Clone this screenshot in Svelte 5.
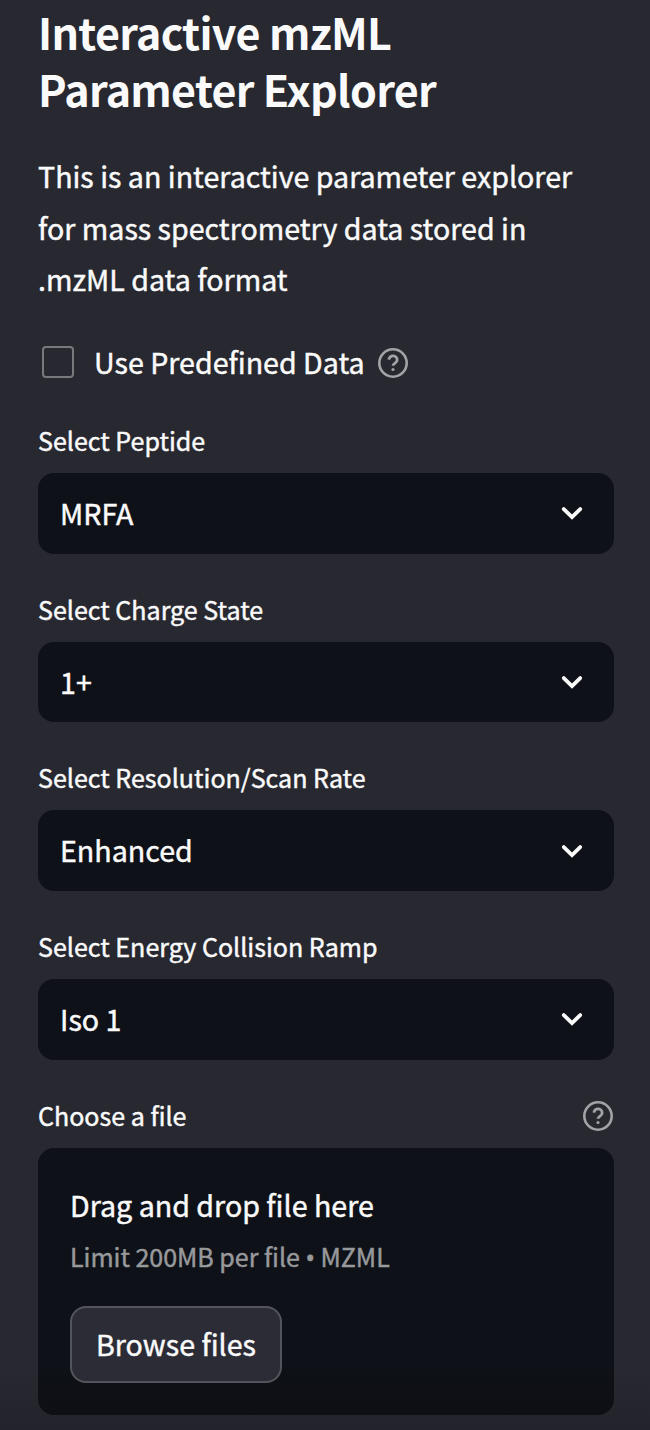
<script>
  const fields = [
    { label: 'Select Peptide', value: 'MRFA' },
    { label: 'Select Charge State', value: '1+' },
    { label: 'Select Resolution/Scan Rate', value: 'Enhanced' },
    { label: 'Select Energy Collision Ramp', value: 'Iso 1' }
  ];
</script>

{#snippet help()}
  <svg class="help" viewBox="0 0 30 30" fill="none" stroke="currentColor" stroke-linecap="round" stroke-linejoin="round">
    <circle cx="15" cy="15" r="13.7" stroke-width="2.6" />
    <path d="M10.9 11.6a4.1 4.1 0 0 1 8.2 .6c0 2.7-4.1 3.1-4.1 5.6" stroke-width="2.8" stroke-linecap="butt" />
    <circle cx="15" cy="21.5" r="1.6" fill="currentColor" stroke="none" />
  </svg>
{/snippet}

<main class="sidebar">
  <h1>Interactive mzML<br />Parameter Explorer</h1>
  <p class="intro">This is an interactive parameter explorer<br />for mass spectrometry data stored in<br />.mzML data format</p>

  <div class="check">
    <span class="box"></span>
    <span class="check-label">Use Predefined Data</span>
    {@render help()}
  </div>

  {#each fields as field}
    <section class="field">
      <div class="label">{field.label}</div>
      <div class="select">
        <span>{field.value}</span>
        <svg class="chevron" viewBox="0 0 22 14" fill="none" stroke="currentColor" stroke-width="3.8" stroke-linecap="round" stroke-linejoin="miter">
          <path d="M2.8 3.1 11 11 19.2 3.1" />
        </svg>
      </div>
    </section>
  {/each}

  <section class="upload">
    <div class="label upload-label"><span>Choose a file</span>{@render help()}</div>
    <div class="dropzone">
      <div class="drag">Drag and drop file here</div>
      <div class="limit">Limit 200MB per file <span class="bullet">•</span> MZML</div>
      <button>Browse files</button>
    </div>
  </section>
</main>

<style>
  :global(body) {
    margin: 0;
    background: #272830;
  }
  .sidebar {
    box-sizing: border-box;
    width: 650px;
    height: 1430px;
    padding: 3px 36px 0 38px;
    overflow: hidden;
    background: linear-gradient(to bottom, #272830 0, #272830 1370px, #22232b 1430px);
    color: #fafafa;
    font-family: "Noto Sans CJK SC", "Source Sans Pro", sans-serif;
    font-size: 28.62px;
    white-space: nowrap;
    -webkit-text-stroke: 0.45px currentColor;
  }
  h1 {
    margin: 0;
    font-size: 43px;
    line-height: 57px;
    font-weight: 700;
    letter-spacing: -0.7px;
    -webkit-text-stroke: 0;
  }
  .intro {
    margin: 33.3px 0 0;
    line-height: 51.4px;
  }
  .check {
    display: flex;
    align-items: center;
    height: 52px;
    margin-top: 31.5px;
  }
  .box {
    box-sizing: border-box;
    width: 32px;
    height: 32px;
    margin: 0 20px 0 4px;
    border: 2px solid #79797d;
    border-radius: 4px;
  }
  .check-label {
    line-height: 52px;
  }
  .help {
    flex: none;
    width: 30px;
    height: 30px;
    color: #a3a3a7;
  }
  .check .help {
    margin: 2px 0 0 13px;
  }
  .field {
    height: 168.7px;
  }
  .check + .field {
    margin-top: 34px;
  }
  .label {
    height: 51px;
    line-height: 37px;
    font-size: 25.05px;
  }
  .select {
    box-sizing: border-box;
    display: flex;
    align-items: center;
    justify-content: space-between;
    height: 80.5px;
    padding: 0 31px 0 22px;
    border-radius: 16px;
    background: #0e1117;
  }
  .select span {
    line-height: 42px;
    padding-bottom: 0.9px;
  }
  .chevron {
    width: 22px;
    height: 14px;
  }
  .upload-label {
    display: flex;
    justify-content: space-between;
  }
  .upload-label .help {
    margin: 4px 1px 0 0;
  }
  .dropzone {
    box-sizing: border-box;
    height: 267px;
    padding: 32px;
    border-radius: 16px;
    background: linear-gradient(to bottom, #0e1117 220px, #0d0f14);
  }
  .drag {
    height: 52px;
    line-height: 50px;
  }
  .limit {
    height: 74px;
    line-height: 48px;
    font-size: 25.05px;
    letter-spacing: -0.03px;
    color: #98999b;
  }
  .bullet {
    font-family: "Noto Sans", sans-serif;
    line-height: 1;
  }
  button {
    box-sizing: border-box;
    display: block;
    width: 212px;
    height: 77px;
    padding: 0 0 2px;
    border: 2px solid #54555c;
    border-radius: 16px;
    background: #2b2c36;
    color: inherit;
    font: inherit;
    line-height: 71px;
    -webkit-text-stroke: inherit;
  }
</style>
